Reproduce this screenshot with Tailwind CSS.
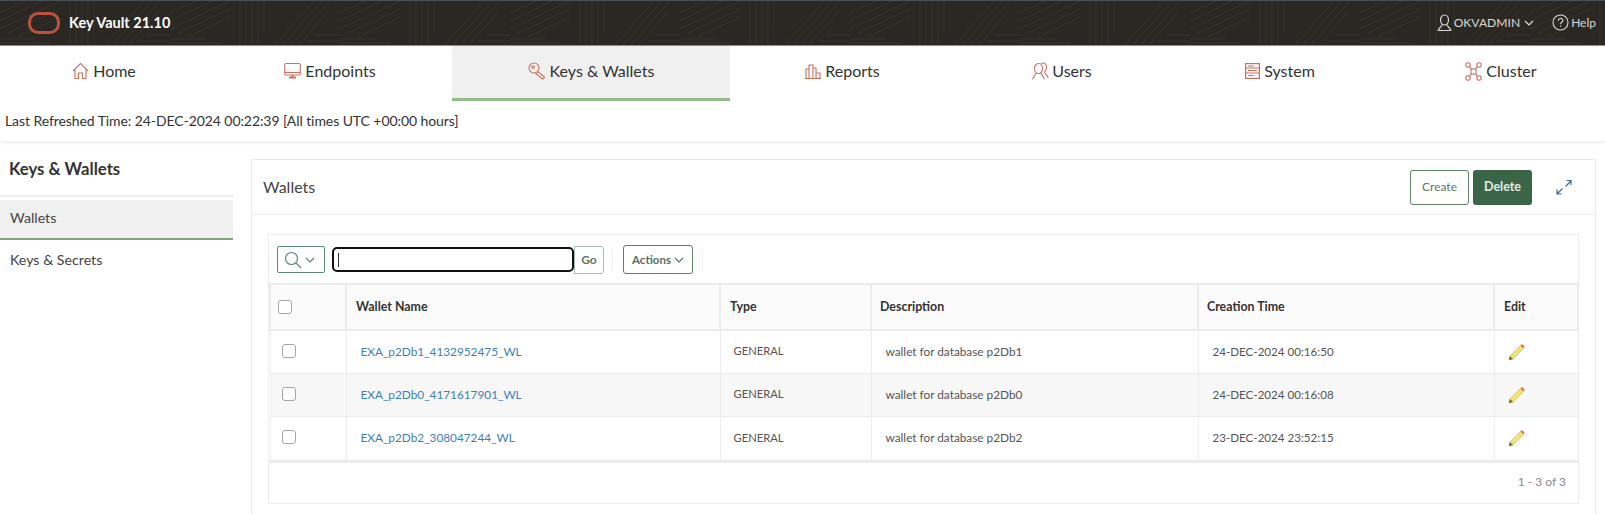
<!DOCTYPE html>
<html lang="en">
	<head>
		<meta charset="UTF-8" />
		<meta name="viewport" content="width=device-width, initial-scale=1.0" />
		<script src="https://cdn.jsdelivr.net/npm/@tailwindcss/browser@4"></script>
		<title>Key Vault - Wallets</title>
	</head>
	<body class="bg-white h-[515px] overflow-hidden font-['Lato',sans-serif] text-[#333]">
		<!-- top bar -->
		<header class="relative h-[46px] bg-[#2b2823] border-t border-t-[#46525a] border-b border-b-[#8d8d88] flex items-center overflow-hidden">
			<svg class="absolute inset-0" width="1605" height="45">
				<defs>
					<pattern id="hatch" width="170" height="45" patternUnits="userSpaceOnUse">
						<g stroke="#35312b" stroke-width="1" fill="none">
							<path d="M0 12l26-12M0 20l42-20M0 28l60-28M8 32l52-24M18 36l42-20" />
							<path d="M70 0v45M76 0v45M82 0v45M88 0v45M94 0v30" />
							<path d="M104 45l40-45M112 45l40-45M120 45l40-45M128 45l30-34" />
							<path d="M0 42h50M0 38h36M138 40h32M146 34h24" />
						</g>
					</pattern>
				</defs>
				<rect width="1605" height="45" fill="url(#hatch)" />
			</svg>
			<div class="relative flex items-center w-full">
				<div class="w-[32px] h-[22px] ml-[28px] rounded-[10px] border-[3px] border-[#b9533f]"></div>
				<span class="ml-[9px] text-white font-bold text-[14.5px]">Key Vault 21.10</span>
				<div class="ml-auto flex items-center text-[#d8d8d4] text-[12.1px] pr-[9px]">
					<svg width="15" height="18" viewBox="0 0 15 18" fill="none" stroke="#d8d8d4" stroke-width="1.2"><ellipse cx="7.5" cy="6" rx="4" ry="5" /><path d="M5 10.5C4.5 13 2 13.5 1.2 16.5H13.8C13 13.5 10.5 13 10 10.5" /></svg>
					<span class="ml-[2px]">OKVADMIN</span>
					<svg class="ml-[4px]" width="10" height="6" viewBox="0 0 10 6" fill="none" stroke="#d8d8d4" stroke-width="1.2"><path d="M1 1l4 4 4-4" /></svg>
					<svg class="ml-[18px]" width="17" height="17" viewBox="0 0 17 17" fill="none" stroke="#d8d8d4" stroke-width="1.1"><circle cx="8.5" cy="8.5" r="7.5" /><path d="M6.3 6.7c0-3 4.5-3 4.5-.2 0 1.8-2.3 1.8-2.3 3.7" /><path d="M8.5 11.6v1.2" /></svg>
					<span class="ml-[2px] text-[12px]">Help</span>
				</div>
			</div>
		</header>

		<!-- main tabs -->
		<nav class="flex h-[55px] text-[16px]">
			<a class="w-[208px] flex items-center justify-center gap-[4px] pb-[5px] text-[#333]">
				<svg width="17" height="18" viewBox="0 0 17 18" fill="none" stroke="#c9705c" stroke-width="1.1"><path d="M1 9l7.5-7.5L16 9M3 7.5V16.5h3.5V11h4v5.5H14V7.5" /></svg>
				Home
			</a>
			<a class="w-[244px] flex items-center justify-center gap-[4px] pb-[5px] text-[#333]">
				<svg width="17" height="18" viewBox="0 0 17 18" fill="none" stroke="#c9705c" stroke-width="1.1"><rect x="0.7" y="1.5" width="15.6" height="11.5" rx="1.5" /><path d="M1 10.5h15" /><path d="M5 15.5h7M8.5 13v2.5" stroke-width="2" /></svg>
				Endpoints
			</a>
			<a class="w-[278px] flex items-center justify-center gap-[4px] pb-[2px] text-[#333] bg-[#f0f0f0] border-b-[3px] border-b-[#93bb8d]">
				<svg width="18" height="18" viewBox="0 0 18 18" fill="none" stroke="#c9705c" stroke-width="1.1"><circle cx="6" cy="6" r="5" /><circle cx="5" cy="5" r="1.3" /><path d="M9.5 9.5l7 5.5-1.5 2-2-1-1-1.5-1.2-.3L7.5 11" /></svg>
				Keys &amp; Wallets
			</a>
			<a class="w-[225px] flex items-center justify-center gap-[4px] pb-[5px] text-[#333]">
				<svg width="16" height="16" viewBox="0 0 16 16" fill="none" stroke="#c9705c" stroke-width="1.1"><path d="M1 15V6h3v9M4 15V2h4v13M8 15V5h3v10M11 15v-5h4v5M0 15.5h16" /></svg>
				Reports
			</a>
			<a class="w-[214px] flex items-center justify-center gap-[3px] pb-[5px] text-[#333]">
				<svg width="17" height="19" viewBox="0 0 17 19" fill="none" stroke="#c9705c" stroke-width="1.1"><ellipse cx="6.5" cy="6.5" rx="4" ry="5" /><path d="M4 11C3.5 13.5 1.2 14 .6 17.5M9 11c.5 2.5 2.8 3 3.4 6.5" /><path d="M9 1.5c3-1.5 6 .5 5.5 4-.2 2-1 3.5-2 4.5.5 2.5 3 3 3.7 6" /></svg>
				Users
			</a>
			<a class="w-[222px] flex items-center justify-center gap-[4px] pb-[5px] text-[#333]">
				<svg width="15" height="16" viewBox="0 0 15 16" fill="none" stroke="#c9705c" stroke-width="1.2"><rect x="0.6" y="0.6" width="13.8" height="14.8" /><path d="M1 5h13M1 10h13M3 3h6M3 7.5h9M3 12.5h6" /></svg>
				System
			</a>
			<a class="w-[214px] flex items-center justify-center gap-[4px] pl-[6px] pb-[5px] text-[#333]">
				<svg width="17" height="19" viewBox="0 0 17 19" fill="none" stroke="#c9705c" stroke-width="1.1"><circle cx="3" cy="3" r="2.2" /><circle cx="14" cy="3" r="2.2" /><circle cx="3" cy="16" r="2.2" /><circle cx="14" cy="16" r="2.2" /><rect x="6" y="7" width="5" height="5" /><path d="M4.5 4.7L6.5 7M12.5 4.7L10.5 7M4.5 14.3L6.5 12M12.5 14.3L10.5 12" /></svg>
				Cluster
			</a>
		</nav>

		<!-- refresh line -->
		<div class="h-[40px] pl-[5px] pb-[2px] flex items-center text-[14px] tracking-[-0.08px] text-[#333] shadow-[0_2px_3px_rgba(0,0,0,0.07)]">Last Refreshed Time: 24-DEC-2024 00:22:39 [All times UTC +00:00 hours]</div>

		<div class="flex">
			<!-- side menu -->
			<aside class="w-[233px] shrink-0">
				<h2 class="h-[56px] pl-[9px] pt-[3px] flex items-center font-bold text-[16.7px] text-[#333] border-b-2 border-b-[#eeeeee]">Keys &amp; Wallets</h2>
				<div class="mt-[3px] h-[40px] pl-[10px] pb-[2px] flex items-center bg-[#f0f0f0] border-b-2 border-b-[#7fa37a] text-[14.2px] text-[#444]">Wallets</div>
				<div class="h-[42px] pl-[10px] pb-[2px] flex items-center text-[14.2px] text-[#444]">Keys &amp; Secrets</div>
			</aside>

			<!-- wallets region -->
			<main class="flex-1 min-w-0 pl-[18px] pr-[9px] pt-[18px]">
				<section class="h-[356px] border border-b-0 border-[#e8e8e8] rounded-t-[2px]">
					<div class="h-[55px] flex items-center pl-[11px] border-b border-b-[#eeeeee]">
						<h3 class="text-[16px] text-[#444]">Wallets</h3>
						<button class="ml-auto w-[59px] h-[35px] border border-[#5d8066] rounded-[3px] text-[12px] text-[#5d7a66]">Create</button>
						<button class="ml-[4px] w-[59px] h-[35px] bg-[#3a6647] rounded-[3px] text-[12.5px] font-bold text-[#e4ece6]">Delete</button>
						<svg class="ml-[24px] mr-[23px]" width="16" height="17" viewBox="0 0 16 17" fill="none" stroke="#3c6a86" stroke-width="1.2"><path d="M9.5 7.5L15 2M10.5 1.5H15V6" /><path d="M6.5 9.5L1 15M1 10.5V15H5.5" /></svg>
					</div>
					<div class="pt-[19px] pl-[16px] pr-[16px]">
						<div class="h-[270px] border border-[#eeeeee]">
							<div class="h-[48px] flex items-center pl-[8px] pt-[1px]">
								<button class="w-[48px] h-[27px] border border-[#5d8a78] rounded-[2px] flex items-center pl-[6px] gap-[3px]">
									<svg width="18" height="18" viewBox="0 0 18 18" fill="none" stroke="#5d8a78" stroke-width="1.2"><circle cx="7.5" cy="7.5" r="6" /><path d="M12 12l5 5" /></svg>
									<svg width="10" height="6" viewBox="0 0 10 6" fill="none" stroke="#5d8a78" stroke-width="1.2"><path d="M1 1l4 4 4-4" /></svg>
								</button>
								<div class="ml-[7px] w-[242px] h-[25px] border-[2.5px] border-[#111] rounded-[5px] flex items-center pl-[4px]"><span class="w-px h-[14px] bg-[#333]"></span></div>
								<button class="w-[30px] h-[28px] border border-[#a9bdb0] rounded-r-[3px] text-[12px] font-bold text-[#5d7a66]">Go</button>
								<span class="ml-[8px] w-px h-[27px] bg-[#f2f2f2]"></span>
								<button class="ml-[10px] w-[70px] h-[29px] border border-[#5d8066] rounded-[3px] flex items-center justify-center gap-[3px] text-[11.5px] font-bold text-[#56705f]">
									Actions
									<svg width="10" height="6" viewBox="0 0 10 6" fill="none" stroke="#56705f" stroke-width="1.1"><path d="M1 1l4 4 4-4" /></svg>
								</button>
								<span class="ml-[9px] w-px h-[27px] bg-[#f2f2f2]"></span>
							</div>
							<table class="w-[1308px] table-fixed border-collapse text-[11.8px] text-[#555]">
								<colgroup>
									<col class="w-[76px]" />
									<col class="w-[374px]" />
									<col class="w-[151px]" />
									<col class="w-[327px]" />
									<col class="w-[296px]" />
									<col class="w-[84px]" />
								</colgroup>
								<thead class="bg-[#fbfbfb] text-[#333] font-bold text-left text-[12.4px]">
									<tr class="h-[46px]">
										<th class="border-2 border-[#ececec] pl-[7px]"><input type="checkbox" class="block w-[14px] h-[14px] appearance-none border border-[#a5a5a5] rounded-[3px] bg-white" /></th>
										<th class="border-2 border-[#ececec] pl-[9px]">Wallet Name</th>
										<th class="border-2 border-[#ececec] pl-[9px]">Type</th>
										<th class="border-2 border-[#ececec] pl-[8px]">Description</th>
										<th class="border-2 border-[#ececec] pl-[8px]">Creation Time</th>
										<th class="border-2 border-[#ececec] pl-[9px]">Edit</th>
									</tr>
								</thead>
								<tbody>
									<tr class="h-[43px]">
										<td class="border border-[#ececec] pl-[11px]"><input type="checkbox" class="block w-[14px] h-[14px] -translate-y-[1px] appearance-none border border-[#a5a5a5] rounded-[3px] bg-white" /></td>
										<td class="border border-[#ececec] pl-[14px] text-[#3f7fb5]">EXA_p2Db1_4132952475_WL</td>
										<td class="border border-[#ececec] pl-[13px] text-[11.2px]">GENERAL</td>
										<td class="border border-[#ececec] pl-[14px]">wallet for database p2Db1</td>
										<td class="border border-[#ececec] pl-[14px] text-[11.6px]">24-DEC-2024 00:16:50</td>
										<td class="border border-[#ececec] pl-[13px]">
											<svg width="17" height="18" viewBox="0 0 17 18"><path d="M1 17l.8-4L12.5 2.5l3 3L5 16z" fill="#f2e27a" stroke="#c9b23c" stroke-width=".6" /><path d="M12.5 2.5L14 1l2.5 2.5-1 2z" fill="#e8703a" /><path d="M1 17l.8-4L5 16z" fill="#6a6a3a" /></svg>
										</td>
									</tr>
									<tr class="h-[43px] bg-[#f7f7f7]">
										<td class="border border-[#ececec] pl-[11px]"><input type="checkbox" class="block w-[14px] h-[14px] -translate-y-[1px] appearance-none border border-[#a5a5a5] rounded-[3px] bg-white" /></td>
										<td class="border border-[#ececec] pl-[14px] text-[#3f7fb5]">EXA_p2Db0_4171617901_WL</td>
										<td class="border border-[#ececec] pl-[13px] text-[11.2px]">GENERAL</td>
										<td class="border border-[#ececec] pl-[14px]">wallet for database p2Db0</td>
										<td class="border border-[#ececec] pl-[14px] text-[11.6px]">24-DEC-2024 00:16:08</td>
										<td class="border border-[#ececec] pl-[13px]">
											<svg width="17" height="18" viewBox="0 0 17 18"><path d="M1 17l.8-4L12.5 2.5l3 3L5 16z" fill="#f2e27a" stroke="#c9b23c" stroke-width=".6" /><path d="M12.5 2.5L14 1l2.5 2.5-1 2z" fill="#e8703a" /><path d="M1 17l.8-4L5 16z" fill="#6a6a3a" /></svg>
										</td>
									</tr>
									<tr class="h-[44px]">
										<td class="border border-[#ececec] pl-[11px]"><input type="checkbox" class="block w-[14px] h-[14px] -translate-y-[1px] appearance-none border border-[#a5a5a5] rounded-[3px] bg-white" /></td>
										<td class="border border-[#ececec] pl-[14px] text-[#3f7fb5]">EXA_p2Db2_308047244_WL</td>
										<td class="border border-[#ececec] pl-[13px] text-[11.2px]">GENERAL</td>
										<td class="border border-[#ececec] pl-[14px]">wallet for database p2Db2</td>
										<td class="border border-[#ececec] pl-[14px] text-[11.6px]">23-DEC-2024 23:52:15</td>
										<td class="border border-[#ececec] pl-[13px]">
											<svg width="17" height="18" viewBox="0 0 17 18"><path d="M1 17l.8-4L12.5 2.5l3 3L5 16z" fill="#f2e27a" stroke="#c9b23c" stroke-width=".6" /><path d="M12.5 2.5L14 1l2.5 2.5-1 2z" fill="#e8703a" /><path d="M1 17l.8-4L5 16z" fill="#6a6a3a" /></svg>
										</td>
									</tr>
								</tbody>
							</table>
							<div class="h-[40px] border-t-2 border-t-[#ececec] flex items-center justify-end pr-[12px] text-[12px] text-[#8a8a8a]">1 - 3 of 3</div>
						</div>
					</div>
				</section>
			</main>
		</div>
	</body>
</html>
